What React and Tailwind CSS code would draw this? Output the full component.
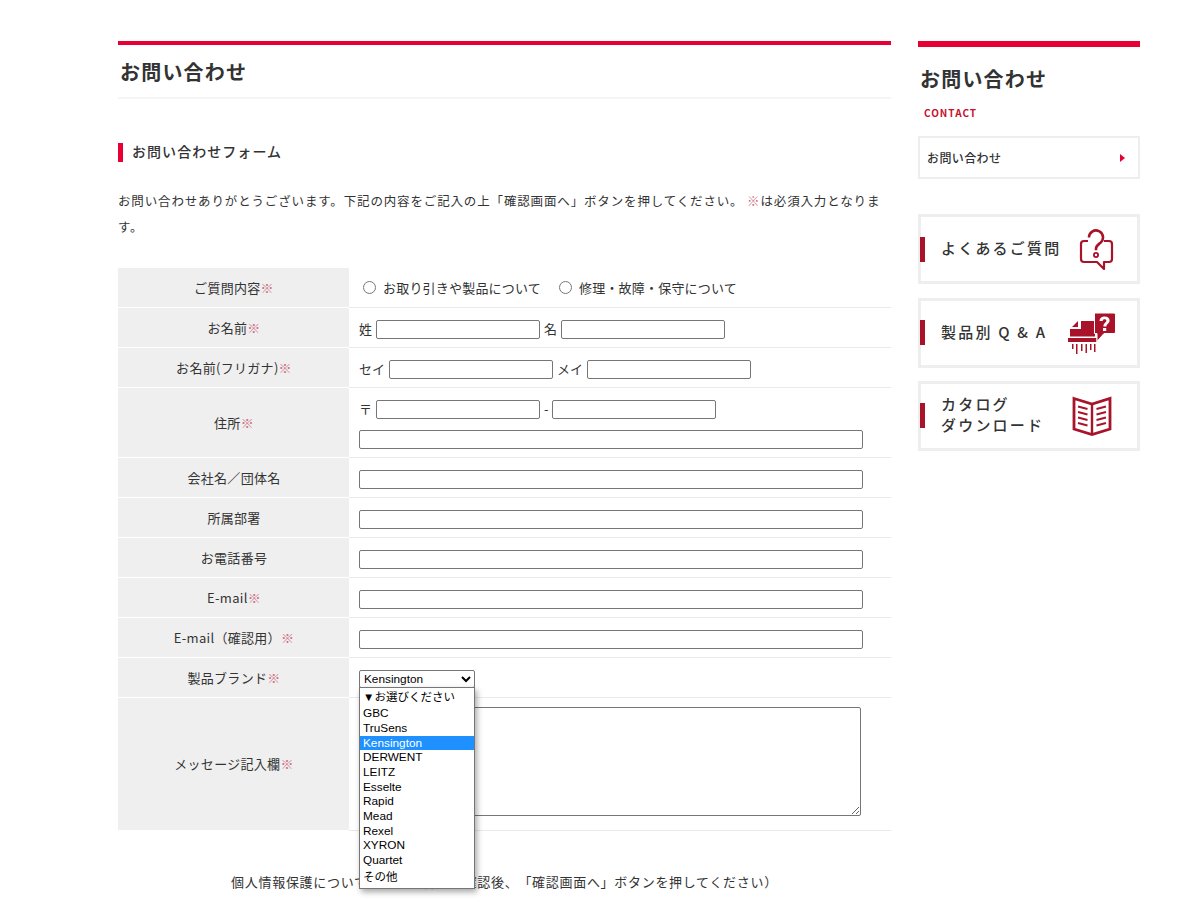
const jp = "font-['Noto_Sans_CJK_JP','Noto_Sans',sans-serif]";
const inputCls = "h-[19px] rounded-[2px] border border-[#767676] bg-white";
const brands = ["▼お選びください", "GBC", "TruSens", "Kensington", "DERWENT", "LEITZ", "Esselte", "Rapid", "Mead", "Rexel", "XYRON", "Quartet", "その他"];

function Req() {
  return <span className="text-[#cf7083]">※</span>;
}

function Row({ label, req, h = "h-10", children }) {
  return (
    <div className={`flex ${h}`}>
      <div className="w-[231px] shrink-0 flex items-center justify-center bg-[#efefef] border-b border-white pl-[1px] tracking-[0.3px]">
        <span>{label}{req && <Req />}</span>
      </div>
      <div className="flex-1 border-b border-[#e9e9e9] pl-[10px] flex flex-col justify-center">{children}</div>
    </div>
  );
}

function FullInput() {
  return <input className={`${inputCls} w-[504px] mt-[3px]`} />;
}

function QuestionIcon() {
  return (
    <svg width="36" height="42" viewBox="0 0 36 42" fill="none" stroke="#a8132a" strokeWidth="2.2" className="shrink-0">
      <path d="M9 13H5a3 3 0 0 0-3 3v15a3 3 0 0 0 3 3h13l7 7v-7h5a3 3 0 0 0 3-3V16a3 3 0 0 0-3-3h-5" strokeLinejoin="round" />
      <path d="M10 9.500a7 7 0 1 1 11.500 5.300c-2.500 2-4.500 3-4.500 6v1.500" strokeWidth="2.600" />
      <circle cx="17" cy="27" r="2.100" strokeWidth="1.800" />
    </svg>
  );
}

function ShredderIcon() {
  return (
    <svg width="48" height="43" viewBox="0 0 48 43" fill="#a8132a" className="shrink-0">
      <path d="M13 9h14v15.500H2V17h11z" />
      <path d="M4 15l6-6v6z" />
      <path d="M0 26h28.500v4H0z" />
      <path d="M4 32h1.500v5H4zM8 32h1.500v10H8zM13 32h1.500v7H13zM17.500 32H19v9h-1.500zM22 32h1.500v6H22zM26 32h1.500v8H26z" />
      <path d="M26.500 1H46a1.500 1.500 0 0 1 1.500 1.500V20a1.500 1.500 0 0 1-1.500 1.500H36l-7 8v-8h-2.500z" stroke="#fff" strokeWidth="1" />
      <path d="M36.500 4.500c-3 0-5 1.500-5 4.500h3.200c0-1.200.7-1.800 1.800-1.800s1.900.6 1.900 1.600c0 1.800-3 2-3 5.700h3c0-2.500 3.200-3 3.200-6 0-2.700-2.100-4-5.100-4z M35 16h3.200v3H35z" fill="#fff" />
    </svg>
  );
}

function BookIcon() {
  return (
    <svg width="40" height="40" viewBox="0 0 40 40" fill="none" stroke="#a8132a" className="shrink-0">
      <path d="M2 2.500l18 5.500 18-5.500V33l-18 5.500L2 33z" strokeWidth="2.800" />
      <path d="M20 8v30" strokeWidth="2.400" />
      <path d="M6 10.500l9.500 2.500M6 16l9.500 2.500M6 21.500l9.500 2.500M6 27l9.500 2.500M34 10.500l-9.500 2.500M34 16l-9.500 2.500M34 21.500l-9.500 2.500M34 27l-9.500 2.500" strokeWidth="1.900" />
    </svg>
  );
}

function Banner({ children, icon, pr, bar, className = "" }) {
  return (
    <a className={`relative flex items-center justify-between h-[70px] border-[3px] border-[#eeeeee] pl-[20px] ${pr} ${className}`}>
      <span className={`absolute -left-[1px] w-[5px] h-[25px] bg-[#a8132a] ${bar}`} />
      <span className="mb-[4px] text-[15px] font-medium leading-[21px] tracking-[2.2px] text-[#333]">{children}</span>
      {icon}
    </a>
  );
}

export default function App() {
  return (
    <div className={`${jp} h-[910px] overflow-hidden bg-white text-[#333] text-[13px] [text-spacing-trim:space-all]`}>
      <div className="flex w-[1022px] ml-[118px] pt-[41px] gap-[27px]">
        <main className="w-[773px] shrink-0">
          <h1 className="border-t-4 border-[#e60033] border-b-2 border-b-[#f5f5f5] h-[58px] flex items-center pl-[2px] pt-[2px] text-[20px] font-bold tracking-[1.2px]">
            お問い合わせ
          </h1>
          <h2 className="mt-[44px] border-l-[5px] border-[#e60033] h-[19px] flex items-center pl-[9px] pb-[2px] text-[14px] font-medium tracking-[1.05px]">
            お問い合わせフォーム
          </h2>
          <p className="mt-[26px] pr-[4px] text-[12.5px] leading-[26px] tracking-[0.85px]">
            お問い合わせありがとうございます。下記の内容をご記入の上「確認画面へ」ボタンを押してください。 <Req />は必須入力となります。
          </p>

          <div className="mt-[28px]">
            <Row label="ご質問内容" req>
              <div className="flex items-center tracking-[0.2px]">
                <input type="radio" name="q" className="ml-[4px] mr-[7px]" />
                <span>お取り引きや製品について</span>
                <input type="radio" name="q" className="ml-[18px] mr-[7px]" />
                <span>修理・故障・保守について</span>
              </div>
            </Row>
            <Row label="お名前" req>
              <div className="flex items-center gap-[4px] mt-[3px]">
                <span>姓</span><input className={`${inputCls} w-[164px]`} />
                <span>名</span><input className={`${inputCls} w-[164px]`} />
              </div>
            </Row>
            <Row label="お名前(フリガナ)" req>
              <div className="flex items-center gap-[4px] mt-[3px]">
                <span>セイ</span><input className={`${inputCls} w-[164px]`} />
                <span>メイ</span><input className={`${inputCls} w-[164px]`} />
              </div>
            </Row>
            <Row label="住所" req h="h-[70px]">
              <div className="flex items-center gap-[4px] mt-[3px] mb-[11px]">
                <span>〒</span><input className={`${inputCls} w-[164px]`} />
                <span>-</span><input className={`${inputCls} w-[164px] -ml-[1px]`} />
              </div>
              <input className={`${inputCls} w-[504px]`} />
            </Row>
            <Row label="会社名／団体名"><FullInput /></Row>
            <Row label="所属部署"><FullInput /></Row>
            <Row label="お電話番号"><FullInput /></Row>
            <Row label="E-mail" req><FullInput /></Row>
            <Row label="E-mail（確認用）" req><FullInput /></Row>
            <Row label="製品ブランド" req>
              <div className="relative mt-[2px]">
                <select defaultValue="Kensington" className="block w-[116px] h-[18px] rounded-[2px] border border-[#767676] bg-white text-black text-[11.8px] font-['Liberation_Sans',sans-serif]">
                  {brands.map((b) => <option key={b}>{b}</option>)}
                </select>
                <ul className="absolute z-10 left-0 top-[17px] w-[116px] h-[202px] border border-[#767676] bg-white text-black text-[11.8px] leading-[14.67px] font-['Liberation_Sans','Noto_Sans_CJK_JP',sans-serif] shadow-[2px_3px_6px_rgba(0,0,0,0.35)]">
                  <li className="px-[3px] leading-[18.7px] text-[11.5px]">▼お選びください</li>
                  {brands.slice(1, -1).map((b) => (
                    <li key={b} className={`px-[3px] ${b === "Kensington" ? "bg-[#1e90ff] text-white" : ""}`}>{b}</li>
                  ))}
                  <li className="px-[3px] leading-[19px] text-[11.5px]">その他</li>
                </ul>
              </div>
            </Row>
            <Row label="メッセージ記入欄" req h="h-[133px]">
              <textarea className="block w-[502px] h-[109px] mb-[5px] rounded-[2px] border border-[#767676] bg-white" />
            </Row>
          </div>

          <p className="mt-[41px] text-center text-[13px] tracking-[0.7px]">
            個人情報保護について（上記内容をご確認後、「確認画面へ」ボタンを押してください）
          </p>
        </main>

        <aside className="w-[222px] shrink-0">
          <div className="border-t-[6px] border-[#e60033] pt-[17px] pl-[2px] text-[20px] leading-[30px] font-bold tracking-[1.2px]">
            お問い合わせ
          </div>
          <div className="mt-[11px] ml-[6px] text-[10px] leading-[15px] font-bold tracking-[1px] text-[#c8102e]">CONTACT</div>
          <a className="mt-[16px] flex items-center justify-between h-[43px] border-2 border-[#eeeeee] pl-[7px] pr-[13px] text-[12px] font-medium tracking-[0.4px]">
            お問い合わせ
            <span className="w-0 h-0 border-y-[4px] border-y-transparent border-l-[5px] border-l-[#e60033]" />
          </a>
          <div className="mt-[35px] flex flex-col gap-[14px]">
            <Banner pr="pr-[22px]" bar="top-[20px]" icon={<QuestionIcon />}>よくあるご質問</Banner>
            <Banner pr="pr-[21px]" bar="top-[19px]" icon={<ShredderIcon />}>製品別 Q &amp; A</Banner>
            <Banner pr="pr-[25px]" bar="top-[19px]" className="-mt-[1px]" icon={<BookIcon />}>カタログ<br />ダウンロード</Banner>
          </div>
        </aside>
      </div>
    </div>
  );
}
